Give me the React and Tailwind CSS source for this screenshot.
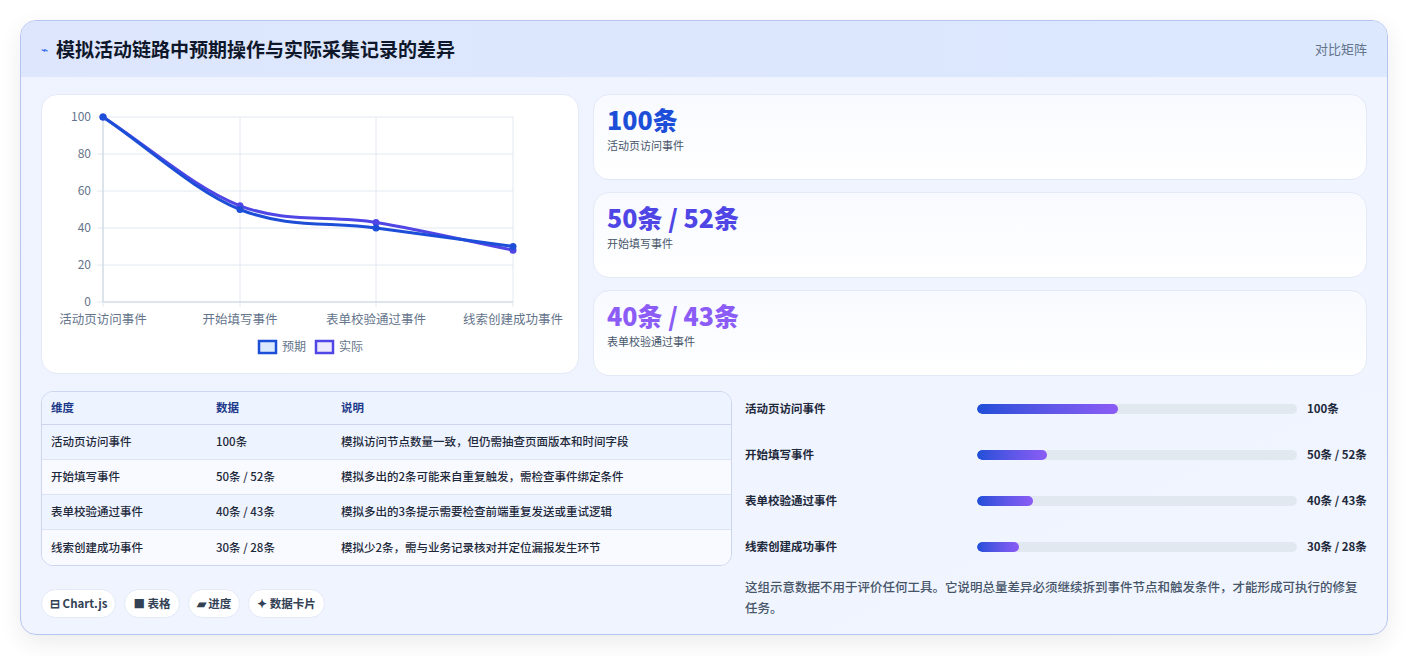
import React from 'react';

const font = { fontFamily: '"Noto Sans CJK SC", "Noto Sans", sans-serif' };

const rows = [
  ['活动页访问事件', '100条', '模拟访问节点数量一致，但仍需抽查页面版本和时间字段'],
  ['开始填写事件', '50条 / 52条', '模拟多出的2条可能来自重复触发，需检查事件绑定条件'],
  ['表单校验通过事件', '40条 / 43条', '模拟多出的3条提示需要检查前端重复发送或重试逻辑'],
  ['线索创建成功事件', '30条 / 28条', '模拟少2条，需与业务记录核对并定位漏报发生环节'],
];

const bars = [
  ['活动页访问事件', '100条', 44],
  ['开始填写事件', '50条 / 52条', 22],
  ['表单校验通过事件', '40条 / 43条', 17.5],
  ['线索创建成功事件', '30条 / 28条', 13],
];

const xs = [101, 238, 374, 511];
const y = (v) => 300 - v * 1.85;

function path(d) {
  const p = d.map((v, i) => [xs[i], y(v)]);
  const n = p.length;
  const m = p.map((_, i) => {
    const a = p[Math.max(0, i - 1)];
    const b = p[Math.min(n - 1, i + 1)];
    const k = i === 0 || i === n - 1 ? 1 : 0.5;
    return [(b[0] - a[0]) * k, (b[1] - a[1]) * k];
  });
  const t = 0.4;
  let s = `M${p[0][0]},${p[0][1]}`;
  for (let i = 1; i < n; i++) {
    const c1 = [p[i - 1][0] + m[i - 1][0] * t / 1.2, p[i - 1][1] + m[i - 1][1] * t / 1.2];
    const c2 = [p[i][0] - m[i][0] * t / 1.2, p[i][1] - m[i][1] * t / 1.2];
    s += ` C${c1[0]},${c1[1]} ${c2[0]},${c2[1]} ${p[i][0]},${p[i][1]}`;
  }
  return s;
}

function Chart() {
  const exp = [100, 50, 40, 30];
  const act = [100, 52, 43, 28];
  return (
    <svg width="538" height="280" viewBox="40 93 538 280" className="block">
      {[0, 20, 40, 60, 80, 100].map((v) => (
        <g key={v}>
          <line x1="95" x2="511" y1={y(v)} y2={y(v)} stroke="#e2e8f0" />
          <text x="89" y={y(v) + 4} textAnchor="end" fontSize="12" fill="#64748b">{v}</text>
        </g>
      ))}
      {xs.map((x) => (
        <line key={x} x1={x} x2={x} y1="115" y2="305" stroke="#e2e8f0" />
      ))}
      <line x1="101" x2="101" y1="115" y2="300" stroke="#cbd5e1" />
      <line x1="101" x2="511" y1="300" y2="300" stroke="#cbd5e1" />
      {['活动页访问事件', '开始填写事件', '表单校验通过事件', '线索创建成功事件'].map((t, i) => (
        <text key={t} x={xs[i]} y="322" textAnchor="middle" fontSize="12.5" fill="#64748b">{t}</text>
      ))}
      <path d={path(act)} fill="none" stroke="#4f46e5" strokeWidth="3" />
      <path d={path(exp)} fill="none" stroke="#1d4ed8" strokeWidth="3" />
      {act.map((v, i) => <circle key={'a' + i} cx={xs[i]} cy={y(v)} r="3.5" fill="#4f46e5" />)}
      {exp.map((v, i) => <circle key={'e' + i} cx={xs[i]} cy={y(v)} r="3.5" fill="#1d4ed8" />)}
      <rect x="257" y="339" width="17" height="12" fill="#dbeafe" stroke="#1d4ed8" strokeWidth="2.5" />
      <text x="280" y="349" fontSize="12" fill="#64748b">预期</text>
      <rect x="314" y="339" width="17" height="12" fill="#ede9fe" stroke="#4f46e5" strokeWidth="2.5" />
      <text x="337" y="349" fontSize="12" fill="#64748b">实际</text>
    </svg>
  );
}

export default function App() {
  return (
    <div className="w-[1408px] h-[656px] bg-white p-5" style={font}>
      <div className="h-[615px] rounded-2xl border border-[#b8c4f0] bg-gradient-to-br from-[#eef3ff] to-[#f0f5ff] shadow-[0_8px_24px_rgba(0,0,0,0.08)] overflow-hidden">
        <div className="h-14 flex items-center justify-between px-5 bg-gradient-to-r from-[#dde6fd] to-[#dbe8fe]">
          <div className="flex items-center gap-2">
            <span className="text-[#2563eb] text-xs">⌁</span>
            <h1 className="text-[19px] font-bold text-[#0f172a]">模拟活动链路中预期操作与实际采集记录的差异</h1>
          </div>
          <span className="text-[13px] text-[#64748b]">对比矩阵</span>
        </div>
        <div className="px-5 pt-[17px]">
          <div className="flex gap-[14px]">
            <div className="w-[538px] h-[280px] rounded-2xl bg-white border border-[#e3e9f7] overflow-hidden">
              <Chart />
            </div>
            <div className="flex-1 flex flex-col gap-[12px]">
              {[
                ['100条', '活动页访问事件', 'text-[#1d4ed8]'],
                ['50条 / 52条', '开始填写事件', 'text-[#4f46e5]'],
                ['40条 / 43条', '表单校验通过事件', 'text-[#8b5cf6]'],
              ].map(([v, l, c]) => (
                <div key={l} className="h-[86px] rounded-2xl bg-gradient-to-b from-[#f8faff] to-white border border-[#e3e9f7] px-[13px] pt-[6px]">
                  <div className={`text-[25px] font-extrabold leading-9 ${c}`}>{v}</div>
                  <div className="text-[11px] text-[#475569]">{l}</div>
                </div>
              ))}
            </div>
          </div>
          <div className="flex gap-[13px] mt-[15px]">
            <div className="w-[691px]">
              <div className="rounded-xl border border-[#cdd6ee] overflow-hidden text-[11.5px] font-medium">
                <div className="grid grid-cols-[165px_125px_1fr] h-[33px] items-center px-[9px] bg-[#eef4ff] border-b border-[#cdd6ee] text-[#1e3a8a] font-semibold">
                  <span>维度</span><span>数据</span><span>说明</span>
                </div>
                {rows.map((r, i) => (
                  <div key={i} className={`grid grid-cols-[165px_125px_1fr] h-[35px] items-center px-[9px] text-[#1e293b] ${i < 3 ? 'border-b border-[#dde4f3]' : ''} ${i % 2 === 0 ? 'bg-[#eef4ff]' : 'bg-[#f8faff]'}`}>
                    <span>{r[0]}</span><span>{r[1]}</span><span>{r[2]}</span>
                  </div>
                ))}
              </div>
              <div className="flex gap-2 mt-[23px] text-[11.5px] font-semibold text-[#334155]">
                {['⊟ Chart.js', '■ 表格', '▰ 进度', '✦ 数据卡片'].map((t) => (
                  <span key={t} className="px-[8px] h-[29px] flex items-center rounded-full bg-white border border-[#e3e9f7]">{t}</span>
                ))}
              </div>
            </div>
            <div className="flex-1 flex flex-col gap-[10px]">
              {bars.map(([l, v, w]) => (
                <div key={l} className="flex items-center h-[36px] text-[11.5px] font-semibold text-[#1e293b]">
                  <span className="w-[232px]">{l}</span>
                  <div className="w-[320px] h-[10px] rounded-full bg-[#e2e8f0] overflow-hidden">
                    <div className="h-full rounded-full bg-gradient-to-r from-[#1d4ed8] to-[#8b5cf6]" style={{ width: `${w}%` }} />
                  </div>
                  <span className="pl-[10px] font-bold whitespace-nowrap">{v}</span>
                </div>
              ))}
              <p className="mt-[1px] text-[12.5px] leading-[21px] font-medium text-[#475569]">这组示意数据不用于评价任何工具。它说明总量差异必须继续拆到事件节点和触发条件，才能形成可执行的修复任务。</p>
            </div>
          </div>
        </div>
      </div>
    </div>
  );
}
